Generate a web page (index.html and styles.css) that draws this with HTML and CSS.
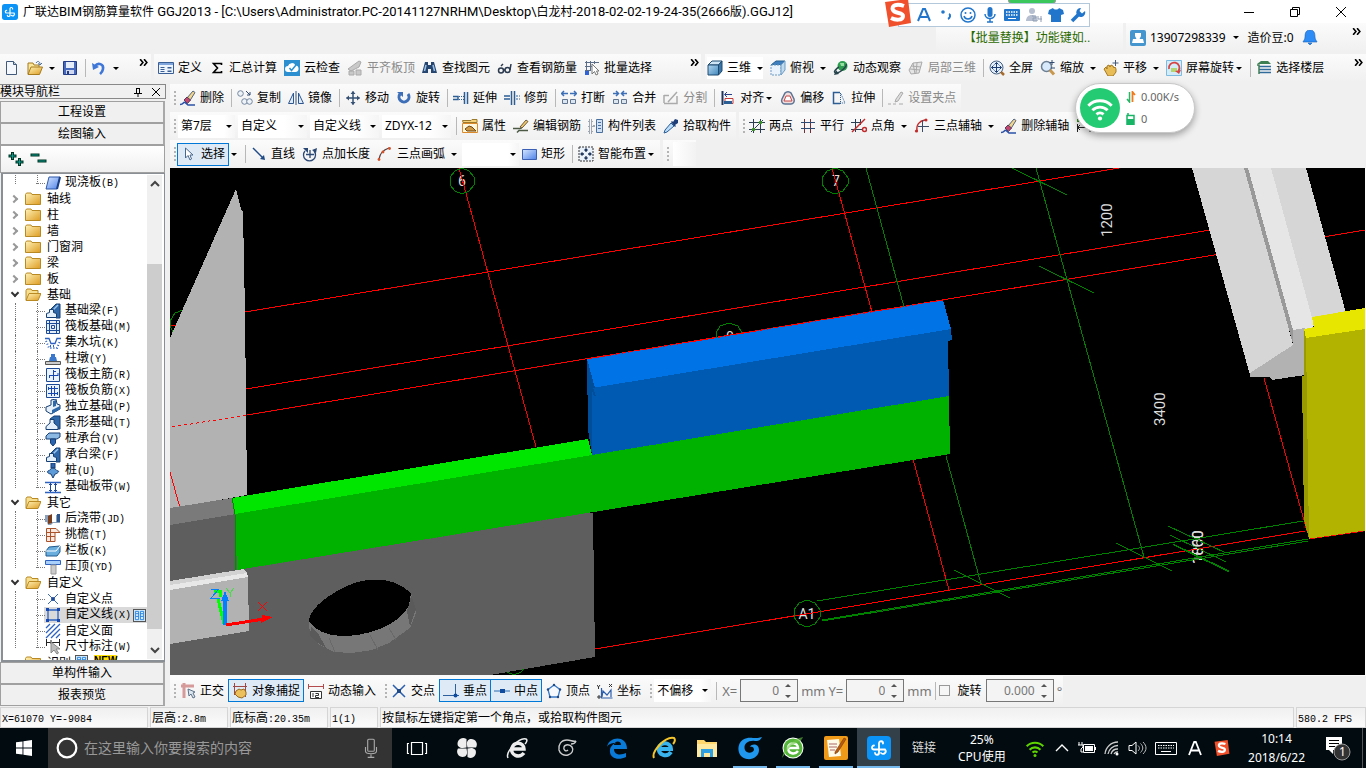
FILE: index.html
```html
<!DOCTYPE html>
<html lang="zh-CN">
<head>
<meta charset="utf-8">
<title>广联达BIM钢筋算量软件 GGJ2013</title>
<link rel="stylesheet" href="styles.css">
</head>
<body>
<svg class="sprite" aria-hidden="true">
  <defs>
    <linearGradient id="gFold" x1="0" y1="0" x2="1" y2="1"><stop offset="0" stop-color="#fff3b8"/><stop offset="1" stop-color="#dd9c22"/></linearGradient>
    <linearGradient id="gBlue" x1="0" y1="0" x2="1" y2="1"><stop offset="0" stop-color="#d6e6ff"/><stop offset="1" stop-color="#4d82e8"/></linearGradient>
    <linearGradient id="gCube" x1="0" y1="0" x2="1" y2="1"><stop offset="0" stop-color="#b5d8f0"/><stop offset="1" stop-color="#4187bd"/></linearGradient>
  </defs>
  <symbol id="glodon" viewBox="0 0 24 24"><rect width="24" height="24" rx="4" fill="#0b93f5"/><path d="M16 7.500a2 2 0 0 0-4-.5v9.500a2 2 0 0 1-4 .5M7 9.500a2 2 0 0 0 0 4h11a2.500 2.500 0 0 1-4 3.500" fill="none" stroke="#fff" stroke-width="1.800" stroke-linecap="round"/></symbol>
  <symbol id="new" viewBox="0 0 16 16"><path d="M2.500 1.500h7l3 3v10h-10z" fill="#f4f8fc" stroke="#40597a"/><path d="M9.500 1.500v3h3" fill="#bcd" stroke="#40597a"/></symbol>
  <symbol id="open" viewBox="0 0 16 16"><path d="M1 14V3h5l1 2h5v3" fill="#fbe79c" stroke="#a67b1d"/><path d="M1 14.500 4 7h11.500l-3 7.500z" fill="url(#gFold)" stroke="#a67b1d"/><path d="M9 3c2-3 4-1 4 1m-2-.5 2 1.500 2-2" fill="none" stroke="#4a6d9a"/></symbol>
  <symbol id="save" viewBox="0 0 16 16"><path d="M1.500 1.500h13v13h-13z" fill="#4668bd" stroke="#243c86"/><path d="M4 2h8v6H4z" fill="#e5ecfa"/><path d="M4 10h8v4H4z" fill="#cfd8ee"/><path d="M5 11h2v3H5z" fill="#243c86"/></symbol>
  <symbol id="undo" viewBox="0 0 16 16"><path d="M4 6c3-4 9-2 8 3-.5 3-2 4-3 5" fill="none" stroke="#3f77d8" stroke-width="2.600"/><path d="M1 3l1 7 6-3z" fill="#3f77d8"/></symbol>
  <symbol id="def" viewBox="0 0 16 16"><path d="M.5 2.500h15v11H.5z" fill="#eef4fb" stroke="#3a5f96"/><path d="M1 3h14v2H1z" fill="#7fa5dc"/><path d="M2.500 7.500h4m-4 2h4m-4 2h4" stroke="#3a5f96"/><path d="M9.500 7h4v1.500h-4zm0 3.500h4V12h-4z" fill="#3a5f96"/></symbol>
  <symbol id="sigma" viewBox="0 0 16 16"><path d="M12.500 5V3.500h-8l4 4.500-4 4.500h8V11" fill="none" stroke="#000" stroke-width="1.600"/></symbol>
  <symbol id="cloud" viewBox="0 0 16 16"><path d="M0 0h16v16H0z" fill="#2b8fd0"/><path d="M4 12a3 3 0 0 1 0-6 4 4 0 0 1 7.500-.5A3.300 3.300 0 0 1 12 12z" fill="#fff"/><path d="M5.500 8l2 2.500L12 5" fill="none" stroke="#2b8fd0" stroke-width="1.500"/></symbol>
  <symbol id="flat" viewBox="0 0 16 16"><path d="M1 9 12 1l2 1-2 5-8 4zM2 11h5v4H2zm7-1h5v5H9z" fill="#c9c9c9" stroke="#aaa"/></symbol>
  <symbol id="bino" viewBox="0 0 16 16"><path d="M3 2h3v3h3V2h3l3 11H9V9H6v4H0z" fill="#27466f"/><path d="M4 5 2.500 11M11 5l1.500 6" stroke="#9bc0ea" stroke-width="1.500"/></symbol>
  <symbol id="glass" viewBox="0 0 16 16"><g fill="none" stroke="#2b3a4e" stroke-width="1.500"><circle cx="4" cy="10.500" r="2.500"/><circle cx="10.500" cy="10" r="2.500"/><path d="M6.500 10h1.500M4 6 6 4M13 10l1-6"/></g></symbol>
  <symbol id="batch" viewBox="0 0 16 16"><path d="M2.500 1v14M6.500 1v10M1 2.500h14M1 6.500h10M1 10.500h6M10.500 1v3" stroke="#5d6f88" fill="none"/><path d="M1 11h4v4H1z" fill="#2f62d6"/><path d="M8 4v10l2.500-2.500L12 15l2-1-1.500-3H15z" fill="#fff" stroke="#777"/></symbol>
  <symbol id="cube" viewBox="0 0 16 16"><path d="M1 5 5 1h10l-3.500 4z" fill="#cfe5f5" stroke="#1f4a70"/><path d="M1 5h10.500v10H1z" fill="url(#gCube)" stroke="#1f4a70"/><path d="M11.500 5 15 1v10l-3.500 4z" fill="#3c76a6" stroke="#1f4a70"/></symbol>
  <symbol id="topv" viewBox="0 0 16 16"><path d="M1 5 6 1h9l-4 4z" fill="#3f7fc0" stroke="#28608f"/><path d="M1 5h10v10H1z" fill="#eaf3fb" stroke="#6d9bc4" stroke-dasharray="2 1"/><path d="M11 5 15 1v9l-4 5z" fill="#c2daee" stroke="#6d9bc4"/></symbol>
  <symbol id="orbit" viewBox="0 0 16 16"><circle cx="9.500" cy="6" r="5" fill="#2e9e50"/><path d="M7 3h4v3H8z" fill="#95e0a0"/><path d="M13 4c2 2-6 9-10 9-4-.5 1-5 3-6" fill="none" stroke="#26424b" stroke-width="1.500"/><path d="M1 15l2-5 3 4z" fill="#26424b"/></symbol>
  <symbol id="local" viewBox="0 0 16 16"><path d="M1 10 5 3l9-1-3 11-8 1zM3 6l10 1M5 3l2 11M9 3l-1 10M2 9l10 1" fill="#e5e5e5" stroke="#aaa"/></symbol>
  <symbol id="full" viewBox="0 0 16 16"><circle cx="7.500" cy="7.500" r="6.500" fill="#e3effa" stroke="#48607e"/><path d="M7.500 2.500v10M2.500 7.500h10M5.500 4.500l2-2 2 2M5.500 10.500l2 2 2-2M4.500 5.500l-2 2 2 2m6-4 2 2-2 2" fill="none" stroke="#1e3d74"/><path d="M12 12l3 3" stroke="#a66b2d" stroke-width="2.500"/></symbol>
  <symbol id="zoom" viewBox="0 0 16 16"><circle cx="6.500" cy="6.500" r="5" fill="#d7e9fa" stroke="#6d7f93" stroke-width="1.500"/><path d="M10 10l4 4.500" stroke="#c8984e" stroke-width="3"/><path d="M12 0v5M9.500 2.500h5M11 8h4" stroke="#334b70"/></symbol>
  <symbol id="pan" viewBox="0 0 16 16"><path d="M1 9l2-2 1 2 0-3 2-1 1 2 1-2 2 1 1 2 1-1 1 2v3l-3 4H5z" fill="#e8bd58" stroke="#a57822"/><path d="M12.500 0v6M9.500 3h6" stroke="#47597a" fill="none"/></symbol>
  <symbol id="rots" viewBox="0 0 16 16"><path d="M.5.500h15v15H.5z" fill="#d3ecf9" stroke="#7dbbe0"/><path d="M5 8h6v4H5z" fill="#b4d670"/><path d="M12.500 11A5.300 5.300 0 1 0 3 9" fill="none" stroke="#d74343" stroke-width="1.800"/><path d="M9 11l6-1-2 4z" fill="#d74343"/></symbol>
  <symbol id="floor" viewBox="0 0 16 16"><path d="M1 4 5 1h7l3 3z" fill="#3f7f54"/><path d="M3 6.500h12M3 9.500h12M3 12.500h12" stroke="#306b9c" stroke-width="1.500"/><path d="M1 5h2v9" fill="none" stroke="#3f7f54" stroke-width="1.500"/></symbol>
  <symbol id="erase" viewBox="0 0 16 16"><path d="M7 8l6-7 2 1.500-5 8z" fill="#f2d58c" stroke="#54647c"/><path d="M4 10l3-3 3.500 3-3 3.500z" fill="#c4456e" stroke="#54405c"/><path d="M0 14.500c4 0 3-3 5-2l3 2.500h3l4 0" fill="none" stroke="#2b52a8" stroke-width="1.500"/></symbol>
  <symbol id="copy" viewBox="0 0 16 16"><g fill="#eef3f8" stroke="#7487a0"><circle cx="3.500" cy="3.500" r="2.800"/><circle cx="7.500" cy="11.500" r="2.800"/><circle cx="12.500" cy="11.500" r="2.800"/></g><path d="M9 1l4 4m0-3v3h-3" stroke="#31496f" fill="none"/></symbol>
  <symbol id="mirror" viewBox="0 0 16 16"><path d="M8 1v14M5.500 3v10.500h-5zM10.500 3v10.500h5z" fill="#dfebf8" stroke="#2f578e"/></symbol>
  <symbol id="move" viewBox="0 0 16 16"><path d="M8 1.500v13M1.500 8h13" stroke="#355174" stroke-width="1.500"/><path d="M8 1l2.500 3h-5zM8 15l-2.500-3h5zM1 8l3-2.500v5zM15 8l-3 2.500v-5z" fill="#355174"/></symbol>
  <symbol id="rotate" viewBox="0 0 16 16"><path d="M4 4a5 5 0 1 0 8 0" fill="none" stroke="#3d6fb9" stroke-width="3"/><path d="M1 2h6v5z" fill="#3d6fb9"/></symbol>
  <symbol id="extend" viewBox="0 0 16 16"><path d="M0 6.500h5v3H0" fill="none" stroke="#2c5e94" stroke-width="1.500"/><path d="M6 6.500h5M6 9.500h5" stroke="#2c5e94" stroke-dasharray="1 1"/><path d="M11.500 2v12M14.500 2v12" stroke="#2c5e94" stroke-width="1.500"/></symbol>
  <symbol id="trim" viewBox="0 0 16 16"><path d="M0 6h6M0 9h6" stroke="#2c5e94" stroke-width="1.500"/><path d="M7.500 1v14M10.500 1v14" stroke="#2c5e94" stroke-width="1.500"/><path d="M12 6h4M12 9h4" stroke="#2c5e94" stroke-dasharray="2 1"/></symbol>
  <symbol id="break" viewBox="0 0 16 16"><path d="M1 3.500h6M9 3.500h6M3 1 .5 3.500 3 6M13 1l2.500 2.500L13 6" fill="none" stroke="#3d6fb9" stroke-width="1.500"/><path d="M1.500 9.500h5v4h-5zM9.500 9.500h5v4h-5z" fill="#dce6f0" stroke="#60758f"/></symbol>
  <symbol id="merge" viewBox="0 0 16 16"><path d="M1 3.500h5M10 3.500h5M4 1l2.500 2.500L4 6M12 1 9.500 3.500 12 6" fill="none" stroke="#3d6fb9" stroke-width="1.500"/><path d="M1.500 9.500h5v4h-5zM9.500 9.500h5v4h-5z" fill="#dce6f0" stroke="#60758f"/></symbol>
  <symbol id="split" viewBox="0 0 16 16"><path d="M1 5.500h5M1 13.500h13V6M1 5v8M5 12 14 2" fill="none" stroke="#aaa" stroke-width="1.500"/></symbol>
  <symbol id="align" viewBox="0 0 16 16"><path d="M2.500 1v14" stroke="#1f365c" stroke-width="2"/><path d="M5 4.500h7M7 2 4.500 4.500 7 7" stroke="#273f8a" fill="none"/><path d="M5 8.500h8v5H5z" fill="#fff" stroke="#c23a3a"/><path d="M4 11h8v3H4z" fill="#2c5e94"/></symbol>
  <symbol id="offset" viewBox="0 0 16 16"><path d="M5 3a4 4 0 0 1 6 0l3 6c1 3-1 5-3 5H5c-3 0-4-3-3-5z" fill="#f3dede" stroke="#5b7494" stroke-width="1.500"/><path d="M6 6h4l2 5H4z" fill="#fff" stroke="#c24949"/></symbol>
  <symbol id="stretch" viewBox="0 0 16 16"><path d="M9 2.500H2.500v11H9" fill="none" stroke="#2c5e94" stroke-width="1.500"/><path d="M9.500 3v11M10 4l4 9H9" fill="none" stroke="#2c5e94" stroke-dasharray="1 1"/></symbol>
  <symbol id="grip" viewBox="0 0 16 16"><path d="M0 14h3M5 14h3M11 14h4M8 9l5-7 2 1-5 8-3 1z" fill="#ddd" stroke="#aaa"/></symbol>
  <symbol id="prop" viewBox="0 0 16 16"><path d="M.5 2.500H9l1-1h5v3h-14z" fill="#f6d27b" stroke="#9b7a2d"/><path d="M.5 5.500h15v9H.5z" fill="#fff8e0" stroke="#dd8a2a"/><path d="M3 11l4-3 3 1 4 4H5z" fill="#cf9a45" stroke="#6d4714"/></symbol>
  <symbol id="edit" viewBox="0 0 16 16"><path d="M0 10.500h7c2 0 2-2 3-3M4 14.500l2-2h9" fill="none" stroke="#4c5a45" stroke-width="1.500"/><path d="M7 9l6-7 2 1.500L9 10z" fill="#f0c868" stroke="#6a5740"/></symbol>
  <symbol id="list" viewBox="0 0 16 16"><path d="M1 2h3v3H1zM1 7h3v3H1zM1 12h3v3H1z" fill="none" stroke="#4a5b73" stroke-dasharray="1 1"/><path d="M8.500 1.500h6v13h-6z" fill="#cfe0f2" stroke="#4a6f9f"/><path d="M10 4.500h3m-3 3h3m-3 3h3" stroke="#4a6f9f"/><path d="M5 8h2" stroke="#4a5b73"/></symbol>
  <symbol id="pick" viewBox="0 0 16 16"><path d="M1 15l1-3 6-7 3 3-7 6z" fill="#b9dcfa" stroke="#2c5e94"/><path d="M8 4l1-1 1 1 2-3 3 1v3l-3 2 1 1-1 1z" fill="#1d3e79"/></symbol>
  <symbol id="twop" viewBox="0 0 16 16"><path d="M4.500 1v14M11.500 1v14M0 4.500h16M0 11.500h16M2 14 14 2" stroke="#2d3e52" fill="none"/><circle cx="4.500" cy="11.500" r="1.800" fill="#3b8f28"/><circle cx="11.500" cy="4.500" r="1.800" fill="#3b8f28"/></symbol>
  <symbol id="para" viewBox="0 0 16 16"><path d="M4.500 1v14M10.500 1v14" stroke="#6f2f38"/><path d="M1 4.500h14M1 10.500h14" stroke="#2d4b74"/></symbol>
  <symbol id="angle" viewBox="0 0 16 16"><path d="M4.500 1v13M0 4.500h10M0 11.500h12M9.500 1v6" stroke="#2d3e52"/><path d="M1 14 14 1" stroke="#c22b2b" stroke-width="1.500"/><circle cx="13.500" cy="11.500" r="2" fill="none" stroke="#c22b2b" stroke-width="1.500"/></symbol>
  <symbol id="arcax" viewBox="0 0 16 16"><path d="M3 13c-1-6 2-10 8-11" fill="none" stroke="#c22b2b" stroke-width="1.300"/><path d="M8.500 2v12M4 8.500h11" stroke="#3b4d66"/><circle cx="2.500" cy="13" r="1.600" fill="#c22b2b"/><circle cx="12" cy="2" r="1.500" fill="#c22b2b"/></symbol>
  <symbol id="dim" viewBox="0 0 16 16"><path d="M1 9.500h14M1.500 6v8M14 6v8M4 7 1.500 9.500 4 12" fill="none" stroke="#222"/><path d="M1 1h3v3H1z" fill="#3b8f28"/></symbol>
  <symbol id="cursor" viewBox="0 0 16 16"><path d="M4.500 2v10l2.500-2.500L9 14l1.500-1L9 9h3z" fill="#fff" stroke="#48698e"/></symbol>
  <symbol id="line" viewBox="0 0 16 16"><path d="M2 2l10 10" stroke="#1f4a86" stroke-width="1.500"/><path d="M14 14l-5-1 4-4z" fill="#1f4a86"/></symbol>
  <symbol id="ptlen" viewBox="0 0 16 16"><path d="M3 5a6 6 0 1 0 9 0M8 4v8M4 8.500h8" fill="none" stroke="#2b4774" stroke-width="1.300"/><path d="M1 2h5v5zM10 4l5-2-1 5z" fill="#2b4774"/></symbol>
  <symbol id="arc3" viewBox="0 0 16 16"><path d="M2 13C3 7 6 4 12 2" fill="none" stroke="#5e3e3e" stroke-width="1.300"/><g fill="#d2522c"><circle cx="2" cy="13.500" r="1.400"/><circle cx="6" cy="6" r="1.400"/><circle cx="12.500" cy="2.500" r="1.400"/></g></symbol>
  <symbol id="rect" viewBox="0 0 16 16"><path d="M1.500 3.500h14v10h-14z" fill="url(#gBlue)" stroke="#3a5fb4"/></symbol>
  <symbol id="smart" viewBox="0 0 16 16"><path d="M1 1h14v14H1z" fill="#e9f1fa" stroke="#333" stroke-dasharray="2 1"/><path d="M8 3v3M8 10v3M3 8h3M10 8h3M6.500 4.500 8 3l1.500 1.500m-3 7L8 13l1.500-1.500M4.500 6.500 3 8l1.500 1.500m7-3L13 8l-1.500 1.500" fill="none" stroke="#1f365c" stroke-width="1.300"/></symbol>
  <symbol id="ortho" viewBox="0 0 16 16"><path d="M1 3h13M4 0v15" stroke="#d69a9a" stroke-width="3"/><path d="M8 6l7 3-2 1 2 4-2 1-2-4-2 2z" fill="#dde5ee" stroke="#5d7189"/></symbol>
  <symbol id="snap" viewBox="0 0 16 16"><path d="M2.500 0v12M13.500 0v14M1 3.500h14" stroke="#9d4747"/><path d="M4 8l3-2 2 1 3-1 2 3v3l-4 3-4-1-3-3z" fill="#ecc05d" stroke="#97691d"/></symbol>
  <symbol id="dyn" viewBox="0 0 16 16"><path d="M.5 1v5M15.500 1v5M0 3.500h16" stroke="#b34d4d"/><path d="M2.500 8.500h11v7h-11z" fill="#fff" stroke="#333"/><path d="M5 10v4M7.500 10.500h3v2h-3v2h3.500" fill="none" stroke="#333"/></symbol>
  <symbol id="cross" viewBox="0 0 16 16"><path d="M2 2l12 12M14 2 2 14" stroke="#2b5fae" stroke-width="1.500"/><path d="M6 6h4v4H6z" fill="#1f4a86"/></symbol>
  <symbol id="perp" viewBox="0 0 16 16"><path d="M0 12.500h16M12.500 1v11" stroke="#2b5f9e"/><circle cx="12.500" cy="12.500" r="2" fill="#0e4a9e"/></symbol>
  <symbol id="mid" viewBox="0 0 16 16"><path d="M0 8h16" stroke="#2b6aae"/><path d="M6 6h5v4H6z" fill="#0e4a9e"/></symbol>
  <symbol id="penta" viewBox="0 0 16 16"><path d="M8 2 14 6.500 12 14H4L2 6.500z" fill="#f6faff" stroke="#3a79c5" stroke-width="1.300"/><g fill="#1f4a86"><circle cx="8" cy="2" r="1.200"/><circle cx="14" cy="6.500" r="1.200"/><circle cx="12" cy="14" r="1.200"/><circle cx="4" cy="14" r="1.200"/><circle cx="2" cy="6.500" r="1.200"/></g></symbol>
  <symbol id="coord" viewBox="0 0 16 16"><path d="M4.500 5v10h11M5 14l1-6 4 4 4-5v7" fill="none" stroke="#2b5fae" stroke-width="1.200"/><path d="M0 2l1.500 2L3 2M1.500 4v2M12 1l3 3m0-3-3 3M1 13h2v2H1z" fill="none" stroke="#333"/></symbol>
  <symbol id="folder" viewBox="0 0 16 16"><path d="M.5 3.500 1.500 2H6l1 1.500h8.500v10H.5z" fill="url(#gFold)" stroke="#b98a24"/></symbol>
  <symbol id="folderO" viewBox="0 0 16 16"><path d="M1 13V3.500L2 2h4l1 1.500h6V6" fill="#f7df92" stroke="#b98a24"/><path d="M1 13.500 4 6.500h12l-3 7z" fill="url(#gFold)" stroke="#b98a24"/></symbol>
  <symbol id="t-slab" viewBox="0 0 16 16"><path d="M4 2h11l-3 12H1z" fill="url(#gBlue)" stroke="#2d57a8"/><path d="M12 14l3-12" stroke="#1a3f86" stroke-width="2"/></symbol>
  <symbol id="t-beam" viewBox="0 0 16 16"><path d="M5 7l6-6h4v14h-4z" fill="#2e68a8" stroke="#163f74"/><path d="M8 7l5-5" stroke="#9cc6ee" stroke-width="1.500"/><path d="M1.500 14.500v-4l3-1V6.500h4v3l3 1v4z" fill="#e3effa" stroke="#163f74"/></symbol>
  <symbol id="t-foot" viewBox="0 0 16 16"><path d="M5 4l4-3h6v13h-5z" fill="#2e68a8" stroke="#163f74"/><path d="M1 14.500v-3L5 8V4.500h4V8l4 3.500v3z" fill="#e3effa" stroke="#163f74"/></symbol>
  <symbol id="t-raft" viewBox="0 0 16 16"><path d="M1.500 1.500h13v13h-13zM4.500 1v14M11.500 1v14M1 4.500h14M1 11.500h14M6.500 6.500h3v3h-3z" fill="#e4edfa" stroke="#1d4a96"/></symbol>
  <symbol id="t-pit" viewBox="0 0 16 16"><path d="M0 3.500h4l2 5h4l2-5h4" fill="none" stroke="#2d62c0" stroke-width="1.300"/><path d="M1 6l3 7h8l3-7M5 11h6" fill="none" stroke="#2d62c0" stroke-width="2" stroke-dasharray="1 2"/></symbol>
  <symbol id="t-pier" viewBox="0 0 16 16"><path d="M4 10l1-4h1V3h4v3h1l1 4z" fill="#3b78cc"/><path d="M.5 10.500h15v3H.5z" fill="#ccc" stroke="#555"/></symbol>
  <symbol id="t-main" viewBox="0 0 16 16"><path d="M1.500 1.500h13v13h-13z" fill="#eaf2fc" stroke="#1d4a96"/><path d="M8.500 3v10M8 4.500h3M4 8.500h9M4.500 8v3M13 6v3" fill="none" stroke="#1747b0"/></symbol>
  <symbol id="t-neg" viewBox="0 0 16 16"><path d="M1.500 1.500h13v13h-13z" fill="#eaf2fc" stroke="#1d4a96"/><path d="M6.500 3v10M9.500 3v10M3 5.500h10M3 10.500h10M3.500 4v3M12.500 9v3" fill="none" stroke="#1747b0"/></symbol>
  <symbol id="t-iso" viewBox="0 0 16 16"><path d="M1 8l5-2V1l5-1 1 5 3 1v4l-9 5-5-3z" fill="#e6f0fa" stroke="#163f74"/><path d="M8 2v6l3-1V1zM7 11l8-4v3l-8 5z" fill="#2e68a8"/></symbol>
  <symbol id="t-pile" viewBox="0 0 16 16"><path d="M6 0h4v5H6z" fill="#2b65b0" stroke="#163f74"/><path d="M3 8c2 0 2-3 5-3s3 3 5 3-1 3-3 3l-2 4-2-4C4 11 1 9 3 8z" fill="#5c9bd8" stroke="#163f74"/></symbol>
  <symbol id="t-cap" viewBox="0 0 16 16"><path d="M1 5l3-3h11v4l-3 2H1z" fill="#8bb9e4" stroke="#163f74"/><path d="M5.500 8h5v4L8 15l-2.500-3z" fill="#2b65b0" stroke="#163f74"/></symbol>
  <symbol id="t-strip" viewBox="0 0 16 16"><path d="M0 3.500h16M0 13.500h16" stroke="#2d62c0" stroke-width="1.500"/><path d="M5.500 4v9M10.500 4v9M4 5.500h3M4 11.500h3M9 5.500h3M9 11.500h3" stroke="#1d4a96"/></symbol>
  <symbol id="t-post" viewBox="0 0 16 16"><path d="M0 4h15v8H8l-2 2H3l-1-3H0z" fill="#8a9fba"/><path d="M3 5l4-2v9l-4 1z" fill="#7b3e1c"/><path d="M12 3h3v8h-3z" fill="#2f568a"/><path d="M7 4h4v7H7z" fill="#fff"/></symbol>
  <symbol id="t-eave" viewBox="0 0 16 16"><path d="M1.500 1.500H11l4 4h-5v9H1.500zM1 5.500h9M1 9.500h9M5.500 2v12" fill="#fbe9df" stroke="#a8532c"/></symbol>
  <symbol id="t-rail" viewBox="0 0 16 16"><path d="M1 8l3-4 11-1v6l-3 4H1z" fill="#6aaede" stroke="#1f5b8e"/><path d="M1 8h10l4-5" fill="none" stroke="#fff"/></symbol>
  <symbol id="t-top" viewBox="0 0 16 16"><path d="M.5 1.500h15v4H.5z" fill="#a8d0fa" stroke="#2d62c0"/><path d="M6 6h5v9H6z" fill="#ccc" stroke="#999"/></symbol>
  <symbol id="t-pt" viewBox="0 0 16 16"><path d="M3 3l10 10M13 3 3 13" stroke="#3c68b8"/><circle cx="8" cy="8" r="2" fill="#1d4a96"/></symbol>
  <symbol id="t-line" viewBox="0 0 16 16"><path d="M3 3h10v10H3z" fill="none" stroke="#2d62c0" stroke-width="1.300"/><g fill="#1747b0"><path d="M1 1h3v3H1zM12 1h3v3h-3zM1 12h3v3H1zM12 12h3v3h-3z"/></g></symbol>
  <symbol id="t-area" viewBox="0 0 16 16"><path d="M1 5l4-4M1 10l9-9M1 15 15 1M6 15l9-9M11 15l4-4" stroke="#2d62c0" stroke-width="1.300"/></symbol>
  <symbol id="t-dim" viewBox="0 0 16 16"><path d="M1 3.500h14M1.500 0v7M14.500 0v7M6 1v4" stroke="#222"/><path d="M6 3v11l3-3 3 4 1.500-1L11 10h4z" fill="#bbb" stroke="#888"/></symbol>
  <symbol id="t-cad" viewBox="0 0 12 12"><path d="M0 0h12v12H0z" fill="#d5ecff"/><path d="M1.500 1.500h3.500v9H1.500zM7 1.500h3.500v9H7zM2 4h3M2 7h3M7 4h3M7 7h3" fill="none" stroke="#2380dd"/></symbol>
  <symbol id="sogou" viewBox="0 0 28 28"><path d="M1 3 24 0l3 24-22 4z" fill="#f0502b"/><path d="M20 7C12 4 7 7 9 11c2 4 10 2 10 6 0 5-8 4-12 2" fill="none" stroke="#fff" stroke-width="4"/></symbol>
  <symbol id="wifi" viewBox="0 0 24 24"><g fill="none" stroke="currentColor" stroke-width="2.500"><path d="M2 10a14 14 0 0 1 20 0M5.500 14a9 9 0 0 1 13 0M9 17.500a4.500 4.500 0 0 1 6 0"/></g><circle cx="12" cy="21" r="1.800" fill="currentColor"/></symbol>
</svg>

<header class="title">
  <svg class="i"><use href="#glodon"/></svg>
  <h1>广联达<span>BIM</span>钢筋算量软件 <span>GGJ2013 - [C:\Users\Administrator.PC-20141127NRHM\Desktop\</span>白龙村<span>-2018-02-02-19-24-35(2666</span>版<span>).GGJ12]</span></h1>
  <div class="winbtns">
    <button aria-label="最小化"><svg viewBox="0 0 12 12"><path d="M1 6.500h10" stroke="#000"/></svg></button>
    <button aria-label="还原"><svg viewBox="0 0 12 12"><path d="M1.500 3.500h7v7h-7zM3.500 3V1.500h7v7H9" fill="none" stroke="#000"/></svg></button>
    <button aria-label="关闭"><svg viewBox="0 0 12 12"><path d="M1 1l10 10M11 1 1 11" stroke="#000"/></svg></button>
  </div>
  <i class="greentab"></i>
  <div class="ime">
    <svg class="imelogo"><use href="#sogou"/></svg>
    <svg viewBox="0 0 16 16"><path d="M2 14 7 2h2l5 12M4.500 10h7" fill="none" stroke="#2176cc" stroke-width="2"/></svg>
    <svg viewBox="0 0 16 16"><circle cx="5" cy="5" r="1.800" fill="#2176cc"/><path d="M11 7c2 1 1 4-1 5" stroke="#2176cc" stroke-width="2" fill="none"/></svg>
    <svg viewBox="0 0 16 16"><circle cx="8" cy="8" r="7" fill="none" stroke="#2176cc" stroke-width="1.500"/><circle cx="5.500" cy="6" r="1" fill="#2176cc"/><circle cx="10.500" cy="6" r="1" fill="#2176cc"/><path d="M4 9c1 4 7 4 8 0" fill="none" stroke="#2176cc" stroke-width="1.500"/></svg>
    <svg viewBox="0 0 16 16"><rect x="5.500" y="0" width="5" height="10" rx="2.500" fill="#2176cc"/><path d="M3 7c0 6 10 6 10 0M8 12v3M5 15h6" fill="none" stroke="#2176cc" stroke-width="1.500"/></svg>
    <svg viewBox="0 0 16 16"><rect y="2" width="16" height="12" rx="1" fill="#2176cc"/><path d="M2 5h12M2 8h12" stroke="#fff" stroke-width="1.500" stroke-dasharray="1.500 1"/><path d="M4 11.500h8" stroke="#fff"/></svg>
    <svg viewBox="0 0 16 16"><circle cx="6" cy="4" r="3" fill="#b5bfd0"/><path d="M0 14c0-8 11-8 12 0z" fill="#b5bfd0"/><path d="M6 9h4v2H7v3h4m1-5v3h4m-1-3v6" fill="none" stroke="#8e9cb4"/></svg>
    <svg viewBox="0 0 16 16"><path d="M5 1 1 3 0 7l3 1v7h10V8l3-1-1-4-4-2c-1 2-5 2-6 0z" fill="#2176cc"/></svg>
    <svg viewBox="0 0 16 16"><path d="M2 14l6-6" stroke="#2176cc" stroke-width="3.500"/><path d="M15 4a4.500 4.500 0 1 1-4-3L9.500 4l2.500 2.500z" fill="#2176cc"/></svg>
  </div>
</header>

<div class="row menu">
  <div class="strip notice song">【批量替换】功能键如..</div>
  <div class="strip acct">
    <svg class="i" viewBox="0 0 16 16"><rect width="16" height="16" rx="2" fill="#4596cf"/><path d="M5 3h6v3l-1.500 3h-3L5 6zM3 9h10l1 4H2z" fill="#fff"/></svg>
    <span>13907298339</span><i class="caret"></i><span class="bean">造价豆:0</span>
    <svg class="i" viewBox="0 0 16 16"><path d="M8 0c4 0 5 3 5 7 0 3 2 4 2 5H1c0-1 2-2 2-5 0-4 1-7 5-7zM6 13h4l-2 2z" fill="#2d8cf5" stroke="#165fb8" stroke-width=".6"/></svg>
    <button class="more" aria-label="更多"><svg viewBox="0 0 8 6"><path d="M1 0l2.500 3L1 6M4.500 0 7 3 4.500 6" fill="none" stroke="#000" stroke-width="1.400"/></svg></button>
  </div>
</div>

<div class="row">
  <div class="strip file">
    <button class="tb" aria-label="新建"><svg class="i"><use href="#new"/></svg></button>
    <button class="tb" aria-label="打开"><svg class="i"><use href="#open"/></svg><i class="caret"></i></button>
    <button class="tb" aria-label="保存"><svg class="i"><use href="#save"/></svg></button><i class="sep"></i>
    <button class="tb" aria-label="撤销"><svg class="i"><use href="#undo"/></svg><i class="caret"></i></button>
    <button class="more" aria-label="更多"><svg viewBox="0 0 8 6"><path d="M1 0l2.500 3L1 6M4.500 0 7 3 4.500 6" fill="none" stroke="#000" stroke-width="1.400"/></svg></button>
  </div>
  <div class="strip calc">
    <button class="tb"><svg class="i"><use href="#def"/></svg>定义</button>
    <button class="tb"><svg class="i"><use href="#sigma"/></svg>汇总计算</button>
    <button class="tb"><svg class="i"><use href="#cloud"/></svg>云检查</button>
    <button class="tb" disabled><svg class="i"><use href="#flat"/></svg>平齐板顶</button>
    <button class="tb"><svg class="i"><use href="#bino"/></svg>查找图元</button>
    <button class="tb"><svg class="i"><use href="#glass"/></svg>查看钢筋量</button>
    <button class="tb"><svg class="i"><use href="#batch"/></svg>批量选择</button>
    <button class="more" aria-label="更多"><svg viewBox="0 0 8 6"><path d="M1 0l2.500 3L1 6M4.500 0 7 3 4.500 6" fill="none" stroke="#000" stroke-width="1.400"/></svg></button>
  </div>
  <div class="strip view">
    <button class="tb pick"><svg class="i"><use href="#cube"/></svg>三维<i class="caret"></i></button>
    <button class="tb"><svg class="i"><use href="#topv"/></svg>俯视<i class="caret"></i></button>
    <button class="tb"><svg class="i"><use href="#orbit"/></svg>动态观察</button>
    <button class="tb" disabled><svg class="i"><use href="#local"/></svg>局部三维</button><i class="sep"></i>
    <button class="tb"><svg class="i"><use href="#full"/></svg>全屏</button>
    <button class="tb"><svg class="i"><use href="#zoom"/></svg>缩放<i class="caret"></i></button>
    <button class="tb"><svg class="i"><use href="#pan"/></svg>平移<i class="caret"></i></button>
    <button class="tb"><svg class="i"><use href="#rots"/></svg>屏幕旋转<i class="caret tight"></i></button><i class="sep"></i>
    <button class="tb"><svg class="i"><use href="#floor"/></svg>选择楼层</button>
    <button class="more" aria-label="更多"><svg viewBox="0 0 8 6"><path d="M1 0l2.500 3L1 6M4.500 0 7 3 4.500 6" fill="none" stroke="#000" stroke-width="1.400"/></svg></button>
  </div>
</div>

<div class="body">
  <aside class="side song">
    <div class="sidehead"><span>模块导航栏</span>
      <svg viewBox="0 0 10 10"><path d="M3.500 1v5M6.500 1v5M3 1.500h4M1 6.500h8M5 7v3" stroke="#000" fill="none"/></svg>
      <svg viewBox="0 0 10 10"><path d="M1 1l8 8M9 1 1 9" stroke="#000" fill="none"/></svg></div>
    <button class="nav">工程设置</button>
    <button class="nav">绘图输入</button>
    <div class="expand">
      <button aria-label="全部展开"><svg viewBox="0 0 16 16"><path d="M1 5h8M5 1v8M8 11h8M12 7v8" stroke="#032" stroke-width="3"/><path d="M2 5h6M5 2v6M9 11h6M12 8v6" stroke="#0b9a8d" stroke-width="1"/></svg></button>
      <button aria-label="全部折叠"><svg viewBox="0 0 16 16"><path d="M0 4h9M7 10h9" stroke="#032" stroke-width="3"/><path d="M1 4h7M8 10h7" stroke="#0b9a8d" stroke-width="1"/></svg></button>
    </div>
    <div class="tree">
      <ul>
        <li class="kid last"><svg class="i"><use href="#t-slab"/></svg><span>现浇板<b>(B)</b></span></li>
        <li class="grp"><i></i><svg class="i"><use href="#folder"/></svg><span>轴线</span></li>
        <li class="grp"><i></i><svg class="i"><use href="#folder"/></svg><span>柱</span></li>
        <li class="grp"><i></i><svg class="i"><use href="#folder"/></svg><span>墙</span></li>
        <li class="grp"><i></i><svg class="i"><use href="#folder"/></svg><span>门窗洞</span></li>
        <li class="grp"><i></i><svg class="i"><use href="#folder"/></svg><span>梁</span></li>
        <li class="grp"><i></i><svg class="i"><use href="#folder"/></svg><span>板</span></li>
        <li class="grp open"><i></i><svg class="i"><use href="#folderO"/></svg><span>基础</span></li>
        <li class="kid"><svg class="i"><use href="#t-beam"/></svg><span>基础梁<b>(F)</b></span></li>
        <li class="kid"><svg class="i"><use href="#t-raft"/></svg><span>筏板基础<b>(M)</b></span></li>
        <li class="kid"><svg class="i"><use href="#t-pit"/></svg><span>集水坑<b>(K)</b></span></li>
        <li class="kid"><svg class="i"><use href="#t-pier"/></svg><span>柱墩<b>(Y)</b></span></li>
        <li class="kid"><svg class="i"><use href="#t-main"/></svg><span>筏板主筋<b>(R)</b></span></li>
        <li class="kid"><svg class="i"><use href="#t-neg"/></svg><span>筏板负筋<b>(X)</b></span></li>
        <li class="kid"><svg class="i"><use href="#t-iso"/></svg><span>独立基础<b>(P)</b></span></li>
        <li class="kid"><svg class="i"><use href="#t-foot"/></svg><span>条形基础<b>(T)</b></span></li>
        <li class="kid"><svg class="i"><use href="#t-cap"/></svg><span>桩承台<b>(V)</b></span></li>
        <li class="kid"><svg class="i"><use href="#t-beam"/></svg><span>承台梁<b>(F)</b></span></li>
        <li class="kid"><svg class="i"><use href="#t-pile"/></svg><span>桩<b>(U)</b></span></li>
        <li class="kid last"><svg class="i"><use href="#t-strip"/></svg><span>基础板带<b>(W)</b></span></li>
        <li class="grp open"><i></i><svg class="i"><use href="#folderO"/></svg><span>其它</span></li>
        <li class="kid"><svg class="i"><use href="#t-post"/></svg><span>后浇带<b>(JD)</b></span></li>
        <li class="kid"><svg class="i"><use href="#t-eave"/></svg><span>挑檐<b>(T)</b></span></li>
        <li class="kid"><svg class="i"><use href="#t-rail"/></svg><span>栏板<b>(K)</b></span></li>
        <li class="kid last"><svg class="i"><use href="#t-top"/></svg><span>压顶<b>(YD)</b></span></li>
        <li class="grp open"><i></i><svg class="i"><use href="#folderO"/></svg><span>自定义</span></li>
        <li class="kid"><svg class="i"><use href="#t-pt"/></svg><span>自定义点</span></li>
        <li class="kid sel"><svg class="i"><use href="#t-line"/></svg><span>自定义线<b>(X)</b></span><svg class="cad"><use href="#t-cad"/></svg></li>
        <li class="kid"><svg class="i"><use href="#t-area"/></svg><span>自定义面</span></li>
        <li class="kid last"><svg class="i"><use href="#t-dim"/></svg><span>尺寸标注<b>(W)</b></span></li>
        <li class="grp cut"><svg class="i"><use href="#folder"/></svg><span>识别</span><svg class="cad"><use href="#t-cad"/></svg><em>NEW</em></li>
      </ul>
      <div class="scroll"><svg viewBox="0 0 10 10"><path d="M1 7l4-4 4 4" fill="none" stroke="#444" stroke-width="2"/></svg><i></i><svg viewBox="0 0 10 10"><path d="M1 3l4 4 4-4" fill="none" stroke="#444" stroke-width="2"/></svg></div>
    </div>
    <button class="nav">单构件输入</button>
    <button class="nav">报表预览</button>
  </aside>

  <main class="work">
    <div class="row">
      <div class="strip">
        <i class="gripper"></i>
        <button class="tb"><svg class="i"><use href="#erase"/></svg>删除</button><i class="sep"></i>
        <button class="tb"><svg class="i"><use href="#copy"/></svg>复制</button>
        <button class="tb"><svg class="i"><use href="#mirror"/></svg>镜像</button><i class="sep"></i>
        <button class="tb"><svg class="i"><use href="#move"/></svg>移动</button>
        <button class="tb"><svg class="i"><use href="#rotate"/></svg>旋转</button><i class="sep"></i>
        <button class="tb"><svg class="i"><use href="#extend"/></svg>延伸</button>
        <button class="tb"><svg class="i"><use href="#trim"/></svg>修剪</button><i class="sep"></i>
        <button class="tb"><svg class="i"><use href="#break"/></svg>打断</button>
        <button class="tb"><svg class="i"><use href="#merge"/></svg>合并</button>
        <button class="tb" disabled><svg class="i"><use href="#split"/></svg>分割</button><i class="sep"></i>
        <button class="tb"><svg class="i"><use href="#align"/></svg>对齐<i class="caret tight"></i></button>
        <button class="tb"><svg class="i"><use href="#offset"/></svg>偏移</button>
        <button class="tb"><svg class="i"><use href="#stretch"/></svg>拉伸</button><i class="sep"></i>
        <button class="tb" disabled><svg class="i"><use href="#grip"/></svg>设置夹点</button>
      </div>
    </div>
    <div class="row">
      <div class="strip picks">
        <i class="gripper"></i>
        <label class="combo"><select class="short" aria-label="楼层"><option>第7层</option></select></label>
        <label class="combo"><select aria-label="构件类别"><option>自定义</option></select></label>
        <label class="combo"><select aria-label="构件类型"><option>自定义线</option></select></label>
        <label class="combo"><select aria-label="构件"><option>ZDYX-12</option></select></label><i class="sep"></i>
        <button class="tb"><svg class="i"><use href="#prop"/></svg>属性</button>
        <button class="tb"><svg class="i"><use href="#edit"/></svg>编辑钢筋</button>
        <button class="tb"><svg class="i"><use href="#list"/></svg>构件列表</button>
        <button class="tb"><svg class="i"><use href="#pick"/></svg>拾取构件</button>
      </div>
      <div class="strip axis">
        <i class="gripper"></i>
        <button class="tb"><svg class="i"><use href="#twop"/></svg>两点</button>
        <button class="tb"><svg class="i"><use href="#para"/></svg>平行</button>
        <button class="tb"><svg class="i"><use href="#angle"/></svg>点角<i class="caret"></i></button>
        <button class="tb"><svg class="i"><use href="#arcax"/></svg>三点辅轴<i class="caret"></i></button>
        <button class="tb"><svg class="i"><use href="#erase"/></svg>删除辅轴</button>
        <button class="tb" aria-label="尺寸标注"><svg class="i"><use href="#dim"/></svg></button>
      </div>
    </div>
    <div class="row">
      <div class="strip draw">
        <i class="gripper"></i>
        <button class="tb on"><svg class="i"><use href="#cursor"/></svg>选择</button><i class="caret tight"></i><i class="sep"></i>
        <button class="tb"><svg class="i"><use href="#line"/></svg>直线</button>
        <button class="tb"><svg class="i"><use href="#ptlen"/></svg>点加长度</button>
        <button class="tb"><svg class="i"><use href="#arc3"/></svg>三点画弧<i class="caret"></i></button>
        <label class="combo"><select class="short" aria-label="画弧方式"><option></option></select></label>
        <button class="tb"><svg class="i"><use href="#rect"/></svg>矩形</button><i class="sep"></i>
        <button class="tb"><svg class="i"><use href="#smart"/></svg>智能布置<i class="caret tight"></i></button>
      </div>
      <div class="strip blank"><i class="gripper"></i><i class="well"></i></div>
    </div>

    <svg class="canvas" viewBox="170 168 1195 507" preserveAspectRatio="xMidYMid slice" shape-rendering="crispEdges">
      <rect x="0" y="0" width="2000" height="1200" fill="#000"/>
      <g class="cadtext" fill="#ddd">
        <text x="462" y="186" text-anchor="middle">6</text><text x="836" y="186" text-anchor="middle">7</text><text x="730" y="342" text-anchor="middle">0</text><text x="807" y="619" text-anchor="middle">A1</text>
        <text class="big" transform="translate(1112 237) rotate(-90)">1200</text>
        <text class="big" transform="translate(1165 426) rotate(-90)">3400</text>
        <text class="big" transform="translate(1203 564) rotate(-90)">1060</text>
        <text class="big" transform="translate(1203 564) rotate(-90)">1800</text>
      </g>
      <g fill="none" stroke="#f00">
        <path d="M170 325h7M245 312 1119 168M246 389 1210 230M247 415 1365 230M595 649 1305 531M459 168 536 447M832 168 872 312M913 459 949 590M1264 378 1307 531"/>
      </g>
      <g fill="none" stroke="#008200">
        <path d="M866 168 904 307M946 456 981 584M1036 168 1144 557M1012 168l55 27M1039 266l55 27M1116 543l56 28M954 570l56 28M1168 526l58 27M1170 535l56 27M1173 544l56 27M1174 545l55 27M817 601 1303 521M822 620 1308 539M822 621 1308 541"/>
        <path d="M462 168l7 3 5 6v8l-5 6-7 3-7-3-5-6v-8l5-6zM835 168l8 3 5 7v6l-5 7-8 3-8-3-5-7v-6l5-7zM729 323l9 3 4 7v6H716v-6l4-7zM807 600l8 3 5 7v7l-5 7-8 3-8-3-5-7v-7l5-7zM183 310l-8 3-5 8v5l4 8M502 664l5 8 7 3 7-3 4-5"/>
      </g>
      <path d="M170 338 236 189l5 20 2 3 2 100 2 183-77 14z" fill="#b2b2b2"/>
      <path d="M172 427l75-12" stroke="#f00" stroke-dasharray="3 3"/><path d="M170 472l10 36" stroke="#f00"/>
      <path d="M170 508l62-10 4 16-66 11z" fill="#7a7a7a"/>
      <path d="M170 525l66-11 357-1 2 144-105 18H170z" fill="#5e5e5e"/>
      <path d="M232 498l356-59 4 16-357 59z" fill="#00e600"/>
      <path d="M235 514 949 396l1 58-713 116z" fill="#00b200"/>
      <path d="M232 498l3 16 1 56" fill="none" stroke="#008c00"/>
      <path d="M170 581l74-12 3 4-77 12z" fill="#d2d2d2"/><path d="M170 585l77-12 1 4-78 13z" fill="#e8e8e8"/><path d="M170 590l78-13 1 54-79 13z" fill="#b2b2b2"/>
      <path d="M309 622l1 14 10 9 14 7 18 1 20-3 17-7 21-15 6-15-5-20z" fill="#777"/>
      <path d="M311 627l7 6 8 15-11-7-5-6zM411 594l5 15-6 17-3-15 3-9z" fill="#5a5a5a"/><path d="M329 638l6 14M370 635l8 15M389 628l7 12" stroke="#696969"/>
      <path d="M309 622c0-12 14-23 30-32 22-13 52-16 72 3l-2 12c-7 16-32 29-61 31-19 1-32-5-39-14z" fill="#000"/>
      <path d="M587 359l8 29-3 67-4-25z" fill="#004d99"/><path d="M587 359 943 300l8 29-356 59z" fill="#0073e6"/><path d="M592 388 951 329l1 11-4 1 1 55-357 59z" fill="#005ab2"/>
      <path d="M587 359 943 300" stroke="#f00" stroke-dasharray="5 2"/><path d="M592 388l3 8" stroke="#004d99" stroke-width="2"/>
      <path d="M1192 168h54l47 177-43 30z" fill="#d6d6d6"/><path d="M1244 168h5l44 161v15z" fill="#999"/><path d="M1271 168h35l40 145-34 6z" fill="#d6d6d6"/><path d="M1248 168h23l43 157-2 4-19 1z" fill="#e6e6e6"/>
      <path d="M1293 330l12-2v47l-33 5-2-3h-20v-4l43-28z" fill="#b2b2b2"/>
      <path d="M1312 317l53-9v21l-59 9-2-9 10-2z" fill="#e6e600"/><path d="M1306 338l59-9v202l-56 8z" fill="#b2b200"/><path d="M1304 329l2 9 3 201-5-19-2-144h2z" fill="#999900"/><path d="M1310 539l55-8" stroke="#f00" stroke-dasharray="5 2"/>
      <g fill="none"><path d="M224 624l-6-25" stroke="#0f0" stroke-width="3"/><path d="M214 591h6v6" stroke="#0f0" stroke-width="3"/><path d="M225 625v-27" stroke="#007fff" stroke-width="4"/><path d="M226 625l38-6" stroke="#f00" stroke-width="3"/><path d="M211 589h8l-8 9h9" stroke="#007fff"/><path d="M226 588l4 5 4-5M230 593v4" stroke="#4d4"/><path d="M258 602l9 9M267 602l-9 9" stroke="#f00"/></g>
      <path d="M225 591l4 10h-8z" fill="#007fff"/><path d="M273 617l-12 6 1-8z" fill="#f00"/>
    </svg>

    <div class="row snapbar">
      <div class="strip">
        <i class="gripper"></i>
        <button class="tb"><svg class="i"><use href="#ortho"/></svg>正交</button>
        <button class="tb on"><svg class="i"><use href="#snap"/></svg>对象捕捉</button>
        <button class="tb"><svg class="i"><use href="#dyn"/></svg>动态输入</button>
      </div>
      <div class="strip">
        <i class="gripper"></i>
        <button class="tb"><svg class="i"><use href="#cross"/></svg>交点</button>
        <button class="tb on"><svg class="i"><use href="#perp"/></svg>垂点</button>
        <button class="tb on"><svg class="i"><use href="#mid"/></svg>中点</button>
        <button class="tb"><svg class="i"><use href="#penta"/></svg>顶点</button>
        <button class="tb"><svg class="i"><use href="#coord"/></svg>坐标</button>
      </div>
      <div class="strip picks">
        <i class="gripper"></i>
        <label class="combo"><select class="short" aria-label="偏移方式"><option>不偏移</option></select></label><i class="sep"></i>
        <label class="num">X=<span><input value="0" disabled><i></i></span>mm</label>
        <label class="num">Y=<span><input value="0" disabled><i></i></span>mm</label><i class="sep"></i>
        <label class="chk"><input type="checkbox">旋转</label>
        <label class="num"><span class="wide"><input value="0.000" disabled aria-label="旋转角度"><i></i></span>°</label>
      </div>
    </div>
  </main>
</div>

<footer class="status song">
  <span class="s1"><b>X=61070 Y=-9084</b></span><span class="s2">层高<b>:2.8m</b></span><span class="s3">底标高<b>:20.35m</b></span><span class="s4"><b>1(1)</b></span><span class="s5">按鼠标左键指定第一个角点，或拾取构件图元</span><span class="s6"><b>580.2 FPS</b></span>
</footer>

<nav class="taskbar">
  <button class="start" aria-label="开始"><svg viewBox="0 0 16 16"><path d="M0 2.300 6.500 1.400v6.100H0zM7.400 1.300 16 0v7.500H7.400zM0 8.500h6.500v6.100L0 13.700zM7.400 8.500H16V16l-8.600-1.300z" fill="#fff"/></svg></button>
  <label class="search"><svg viewBox="0 0 20 20"><circle cx="10" cy="10" r="8.500" fill="none" stroke="#fff" stroke-width="2"/></svg><input placeholder="在这里输入你要搜索的内容"><svg viewBox="0 0 20 20"><rect x="7" y="2" width="6" height="11" rx="1" fill="none" stroke="#aaa"/><path d="M5 9v4c0 3 10 3 10 0V9M10 16v2.500M7 18.500h6" fill="none" stroke="#aaa"/></svg></label>
  <div class="apps">
    <button aria-label="任务视图"><svg viewBox="0 0 24 24"><path d="M6.500 6.500h11v12h-11zM4 7.500H2.500v10H4M20 7.500h1.500v10H20" fill="none" stroke="#fff" stroke-width="1.200"/></svg></button>
    <button aria-label="四叶草"><svg viewBox="0 0 24 24"><path d="M11.500 11.500V3C6 0 1 5 3 10c3 3 6 2 8.500 1.500zM12.500 11.500H21c3-5-2-10-7-8-3 2-2 5-1.500 8zM12.500 12.500V21c5 3 10-2 8-7-3-3-5-2-8-1.500zM11.500 12.500H3c-3 5 2 10 7 8 3-2 2-5 1.500-8z" fill="#eee"/></svg></button>
    <button aria-label="浏览器"><svg viewBox="0 0 24 24"><path d="M19 17c-5 6-14 2-12-5 2-7 12-6 12 1H8" fill="none" stroke="#eee" stroke-width="3.500"/><path d="M3 22C0 16 14 1 21 3c2 1 0 4-1 5" fill="none" stroke="#eee" stroke-width="1.500"/></svg></button>
    <button aria-label="螺旋"><svg viewBox="0 0 24 24"><path d="M21 5c-3 1-5-1-9-1-6 0-9 5-8 10 1 4 5 6 9 5s6-5 4-8-7-3-8 0 2 5 4 3M21 5c-1 3-4 3-5 3" fill="none" stroke="#ccc" stroke-width="1.400"/></svg></button>
    <button aria-label="Edge"><svg viewBox="0 0 24 24"><path d="M2 11C4 0 22-1 22 13H9c0 7 8 6 12 4v4c-8 4-17 1-16-7 0-3 3-6 6-7-6 0-8 2-9 4zm7-2h7c0-5-7-4-7 0z" fill="#0a7ad8"/></svg></button>
    <button aria-label="IE"><svg viewBox="0 0 24 24"><path d="M19 16c-4 6-13 3-12-4 1-7 12-6 12 1H8" fill="none" stroke="#3ab4ee" stroke-width="4"/><path d="M2 22C-1 16 13 0 22 2c2 2 0 5-1 6" fill="none" stroke="#f6c52c" stroke-width="2"/></svg></button>
    <button aria-label="文件资源管理器"><svg viewBox="0 0 24 24"><path d="M2 4h7l2 2h11v15H2z" fill="#ffd76c"/><path d="M2 8h20v13H2z" fill="#ffe9a0"/><path d="M6 13h12v8h-3v-4H9v4H6z" fill="#2e9fe0"/></svg></button>
    <button class="run" aria-label="广联达"><svg viewBox="0 0 24 24"><path d="M24 1c-2 4-4 4-7 4C9 4 5 9 7 14c2 4 8 3 9 0 0-3-2-4-4-3 2-4 9-3 9 3 0 6-6 10-12 9C2 22-1 15 1 9 3 3 9 1 15 2c4 0 6 0 9-1z" fill="#1f97ee"/></svg></button>
    <button class="run" aria-label="360浏览器"><svg viewBox="0 0 24 24"><circle cx="12" cy="12" r="10.500" fill="#fff"/><circle cx="12" cy="12" r="9.500" fill="#55b53a"/><path d="M17 15c-3 4-10 3-10-3 1-6 10-6 10 0H8" fill="none" stroke="#fff" stroke-width="2.500"/><path d="M1 22C3 12 10 4 22 1c-2 5-6 5-10 8-5 3-7 8-11 13z" fill="#6cc644" opacity=".6"/></svg></button>
    <button class="run" aria-label="记事"><svg viewBox="0 0 24 24"><rect width="24" height="24" rx="2" fill="#f09a1a"/><path d="M3 4l12-1 2 17-12 1z" fill="#fffbe8"/><path d="M5 8h8M5 11h8M6 14h5" stroke="#a66" stroke-width="1.200"/><path d="M11 16 20 2l2 1-8 13-3 2z" fill="#b85a10" stroke="#7a3a08" stroke-width=".6"/></svg></button>
    <button class="run act" aria-label="GGJ2013"><svg><use href="#glodon"/></svg></button>
  </div>
  <a class="link" href="#">链接</a>
  <p class="cpu">25%<br>CPU使用</p>
  <div class="tray">
    <svg class="g"><use href="#wifi"/></svg>
    <svg viewBox="0 0 20 20"><path d="M4 13l6-6 6 6" fill="none" stroke="#fff" stroke-width="1.400"/></svg>
    <svg viewBox="0 0 20 20"><path d="M6.500 6.500h11v8h-11zM18.500 9v3M2 4v3m3-3v3M1 7h5v2L4 11v3h2" fill="none" stroke="#fff"/><path d="M8 8h8v5H8z" fill="#fff"/></svg>
    <svg viewBox="0 0 20 20"><path d="M3 16A13 13 0 0 1 16 4M6 16A10 10 0 0 1 16 7.500M9 16a7 7 0 0 1 7-5M12 16a4 4 0 0 1 4-2" fill="none" stroke="#ccc" stroke-width="1.300"/><circle cx="15" cy="16" r="1.500" fill="#fff"/></svg>
    <svg viewBox="0 0 20 20"><path d="M2 7.500h3l4-3.500v12l-4-3.500H2z" fill="none" stroke="#fff"/><path d="M11 7.500c2 2 2 3.500 0 5.500M13.500 5.500c3 3 3 6 0 9M16 4c4 4 4 8 0 12" fill="none" stroke="#bbb"/></svg>
    <svg class="kb" viewBox="0 0 24 20"><path d="M1.500 4.500h21v12h-21z" fill="none" stroke="#fff"/><path d="M4 7.500h16M4 10h16" stroke="#fff" stroke-dasharray="1.500 1"/><path d="M7 13.500h10" stroke="#fff"/></svg>
    <svg viewBox="0 0 20 20"><path d="M4 17 9.200 4h1.600L16 17M6 12.500h8" fill="none" stroke="#fff" stroke-width="1.800"/></svg>
    <svg class="sg"><use href="#sogou"/></svg>
  </div>
  <time class="clock">10:14<br>2018/6/22</time>
  <button class="note" aria-label="通知"><svg viewBox="0 0 26 26"><path d="M1 2h16v13H8v4l-4-4H1z" fill="#fff"/><path d="M4 5.500h10M4 8.500h10M4 11.500h6" stroke="#000"/><circle cx="17" cy="17" r="8" fill="#333" stroke="#999"/></svg><span>1</span></button>
</nav>

<div class="float">
  <i><svg><use href="#wifi"/></svg></i>
  <p><svg viewBox="0 0 12 12"><path d="M4.500 1v10L2 8" fill="none" stroke="#24b765" stroke-width="1.500"/><path d="M7.500 11V1l2.500 3" fill="none" stroke="#f07a1c" stroke-width="1.800"/></svg>0.00K/s</p>
  <p><svg viewBox="0 0 12 12"><path d="M2 2.500h7v9H2zM3 0v3" fill="none" stroke="#18b566" stroke-width="1.500"/><path d="M2 6h7v5H2z" fill="#18b566"/></svg>0</p>
</div>
</body>
</html>
```
FILE: styles.css
```css
* { box-sizing: border-box; }
body {
  margin: 0; height: 100vh; display: flex; flex-direction: column; overflow: hidden;
  background: #f0f0f0; color: #000;
  font: 12px/16px "Noto Sans", "Noto Sans CJK SC", sans-serif;
}
button, input, select { font: inherit; color: inherit; margin: 0; padding: 0; border: 0; background: none; border-radius: 0; }
p, h1, ul { margin: 0; padding: 0; list-style: none; font-weight: normal; }
svg { flex: none; display: block; }
.sprite { position: absolute; width: 0; height: 0; }
.i { width: 16px; height: 16px; }
.song { font-family: "Liberation Sans", "Noto Sans CJK SC", sans-serif; }
.song b { font: 10px/16px "Liberation Mono", monospace; }

/* title bar */
.title { height: 23px; flex: none; background: #fff; display: flex; align-items: center; padding: 0 5px 0 2px; gap: 5px; position: relative; }
.title h1 { font-size: 12px; line-height: 22px; white-space: nowrap; }
.title h1 span { font-family: Roboto, sans-serif; font-size: 13px; }
.winbtns { margin-left: auto; display: flex; }
.winbtns button { width: 46px; height: 20px; display: grid; place-items: center; }
.winbtns svg { width: 12px; height: 12px; }
.winbtns button:last-child { margin-right: -3px; }
.ime { position: absolute; right: 276px; top: 3px; z-index: 3; height: 24px; width: 192px; border: 1px solid #b4c8dc; background: #fff; display: flex; align-items: center; justify-content: flex-end; gap: 6px; padding-right: 3px; }
.ime svg { width: 16px; height: 16px; }
.ime .imelogo { position: absolute; left: -15px; top: -5px; width: 28px; height: 28px; }
.greentab { position: absolute; right: 310px; top: 0; width: 48px; height: 4px; background: #3cc75c; border: 1px solid #999; border-top: 0; border-radius: 0 0 6px 6px; }

/* toolbars */
.row { display: flex; flex: none; height: 28px; gap: 3px; }
.strip { display: flex; align-items: center; gap: 7px; padding: 0 5px 0 4px; background: linear-gradient(#fbfbfb, #f0f0f0); white-space: nowrap; }
.menu { height: 31px; justify-content: flex-end; padding-bottom: 2px; }
.notice { width: 187px; justify-content: center; color: #2b6a00; padding-left: 0; }
.acct { width: 240px; font-size: 12px; gap: 4px; }
.bean { margin: 0 4px 0 3px; }
.more { align-self: flex-start; margin: 5px 0 0 auto; width: 9px; height: 6px; }
.more svg { width: 9px; height: 7px; }
.file { width: 151px; padding-right: 3px; }
.calc { width: 547px; padding-right: 2px; }
.view { flex: 1; padding-left: 2px; padding-right: 3px; margin-left: 1px; }
.pick { background: #fff; height: 24px; }
.tb { display: flex; align-items: center; gap: 4px; height: 22px; flex: none; }
.tb:disabled { color: #8a8a8a; }
.caret { width: 12px; flex: none; display: grid; place-items: center; margin-right: -1px; }
.caret::after, .combo::after { content: ""; border: 3px solid transparent; border-top-color: #000; border-bottom: 0; }
.tb .caret { margin: 0 -3px 0 -1px; }
.caret.tight, .tb .caret.tight { width: 8px; margin: 0 0 0 -3px; }
.sep { width: 1px; height: 18px; background: #b8b8b8; margin-right: -2px; }
.gripper { width: 2px; height: 14px; background: repeating-linear-gradient(#b4b4b4 0 2px, transparent 2px 4px); margin-right: -3px; }
.on { background: #deebf7; border: 1px solid #0078d7; padding: 0 3px; margin: 0 -3px 0 -3px; height: 23px; }
.on + .on { margin-left: -5px; }
.combo { display: flex; align-items: center; position: relative; height: 23px; background: linear-gradient(90deg, #fff 0 46px, #f5f5f5); margin-right: -4px; }
.combo::after { position: absolute; right: 3px; pointer-events: none; }
.combo select { appearance: none; width: 69px; height: 23px; padding-left: 3px; }
.combo .short { width: 57px; }
.picks .gripper { margin-right: -5px; }
.picks > .combo + .sep { margin-left: 2px; }
.draw .combo { margin: 0 -5px 0 -2px; }
.well { width: 23px; height: 24px; background: linear-gradient(90deg, #fff, #f2f2f2); }
.blank { padding-right: 0; }

/* body split */
.body { flex: 1; min-height: 0; display: flex; gap: 4px; margin-top: 2px; }
.side { width: 166px; flex: none; display: flex; flex-direction: column; }
.sidehead { height: 15px; border: 1px solid #888; border-left: 0; display: flex; align-items: center; gap: 8px; padding-right: 4px; margin-bottom: 2px; }
.sidehead span { margin-right: auto; }
.sidehead svg { width: 10px; height: 10px; }
.nav { height: 22px; flex: none; border: 1px solid #a0a0a0; border-right: 2px solid #a8a8a8; background: #f0f0f0; margin-right: 1px; }
.expand { height: 28px; flex: none; display: flex; align-items: center; gap: 6px; padding: 0 6px; border: 1px solid #a0a0a0; background: linear-gradient(#fff, #f0f0f0); margin-right: 1px; }
.expand svg { width: 17px; height: 16px; }
.tree { flex: 1; min-height: 0; overflow: hidden; display: flex; background: #fff; border: 2px solid #8a8f96; border-top-width: 1px; border-right-width: 1px; margin: 0 1px; padding: 1px 2px 1px 0; }
.tree ul { flex: 1; min-width: 0; }
.tree li { display: flex; align-items: center; height: 16px; white-space: nowrap; position: relative; }
.tree span { line-height: 16px; }
.kid { padding-left: 42px; gap: 4px; }
.kid::before { content: ""; position: absolute; left: 12px; top: 0; width: 21px; height: 16px; border-left: 1px dotted #777; border-right: 1px dotted #777; }
.kid.last::before { height: 9px; }
.kid::after { content: ""; position: absolute; left: 33px; top: 8px; width: 9px; border-top: 1px dotted #777; }
.grp { gap: 6px; padding-left: 22px; }
.grp i { position: absolute; left: 8px; width: 6px; height: 6px; border: solid #999; border-width: 2px 2px 0 0; transform: rotate(45deg); }
.grp.open i { border-color: #333; transform: rotate(135deg); left: 9px; top: 3px; }
.sel { background: linear-gradient(90deg, transparent 41px, #d9d9d9 41px); }
.cad { width: 13px; height: 13px; border: 1px solid #555; margin-left: -2px; }
.grp.cut { align-items: flex-start; }
.cut em { background: #ffe000; font: bold 10px/12px "Liberation Sans", sans-serif; }
.scroll { width: 15px; flex: none; background: #f0f0f0; display: flex; flex-direction: column; align-items: center; padding: 4px 0; }
.scroll svg { width: 10px; height: 10px; }
.scroll i { width: 15px; flex: 1; margin: 75px 0 16px; background: #cdcdcd; }
.work { flex: 1; min-width: 0; display: flex; flex-direction: column; }
.canvas { flex: 1; min-height: 0; width: 100%; border-right: 1px solid #fff; }
.cadtext { font: 14px Roboto, sans-serif; }
.cadtext .big { font-size: 15px; }

/* bottom bars */
.snapbar { height: 31px; gap: 0; border-top: 1px solid #fafafa; }
.snapbar .strip { padding-right: 5px; padding-bottom: 1px; }
.num { display: flex; align-items: center; gap: 3px; font-size: 13px; color: #777; margin-right: -4px; }
.num span { display: flex; align-items: center; width: 58px; height: 23px; border: 1px solid #777; background: #f4f4f4; }
.num .wide { width: 68px; }
.num input { flex: 1; min-width: 0; text-align: right; font-size: 12px; }
.num i { width: 18px; height: 18px; flex: none; display: flex; flex-direction: column; justify-content: space-between; align-items: center; padding: 2px; }
.num i::before, .num i::after { content: ""; border: 3px solid transparent; border-bottom-color: #555; border-top: 0; }
.num i::after { border-top: 3px solid #555; border-bottom: 0; }
.chk { display: flex; align-items: center; gap: 8px; margin: 0 -3px 0 -2px; }
.chk input { appearance: none; width: 11px; height: 11px; border: 1px solid #999; background: #f6f6f6; }
.status { display: flex; flex: none; height: 22px; gap: 2px; padding-top: 1px; }
.status span { border: 1px solid #d5d5d5; background: linear-gradient(#f0f0f0, #fbfbfb); padding: 1px 1px; line-height: 18px; white-space: pre; }
.s1 { width: 148px; } .s2 { width: 78px; } .s3 { width: 98px; } .s4 { width: 48px; } .s5 { flex: 1; } .s6 { width: 70px; }

/* task bar */
.taskbar { height: 40px; flex: none; background: #020c10; color: #fff; display: flex; align-items: center; }
.start { width: 48px; height: 40px; display: grid; place-items: center; }
.start svg { width: 16px; height: 16px; }
.search { width: 344px; height: 40px; background: #333; display: flex; align-items: center; padding: 0 10px 0 8px; gap: 6px; }
.search svg { width: 22px; height: 22px; }
.search input { flex: 1; min-width: 0; font-size: 14px; }
.search input::placeholder { color: #999; opacity: 1; }
.apps { display: flex; }
.apps button { width: 43px; height: 40px; display: grid; place-items: center; }
.apps button:nth-child(-n+5) { width: 50px; }
.apps svg { width: 24px; height: 24px; }
.apps .run { background: linear-gradient(#76b9ed, #76b9ed) 50% 100% / 34px 2px no-repeat; }
.apps .act { background-color: #33404a; background-size: 43px 2px; }
.link { color: #ddd; text-decoration: none; margin-left: 12px; }
.cpu { margin-left: 22px; text-align: center; line-height: 17px; white-space: nowrap; }
.tray { display: flex; align-items: center; gap: 5px; margin-left: auto; }
.tray svg { width: 20px; height: 20px; }
.tray .g { color: #5fd400; margin-right: 2px; }
.tray .kb { width: 24px; margin: 0 2px; }
.tray .sg { width: 16px; height: 16px; margin: 0 4px; }
.clock { margin: 0 8px 0 14px; text-align: center; line-height: 19px; }
.note { width: 50px; height: 40px; margin-right: 3px; border-right: 1px solid #555; position: relative; display: grid; place-items: center; }
.note svg { width: 26px; height: 26px; }
.note span { position: absolute; left: 26px; top: 16px; font-size: 12px; }

/* network widget */
.float { position: absolute; right: 171px; top: 83px; width: 120px; height: 50px; border-radius: 25px; background: #fff; border: 1px solid #c8c8c8; box-shadow: 0 3px 7px #0005; display: grid; grid-template-columns: 45px 1fr; align-content: center; row-gap: 4px; padding-left: 4px; color: #666; font-size: 11px; }
.float > i { grid-row: 1 / 3; width: 40px; height: 40px; border-radius: 50%; background: #25cb73; color: #fff; display: grid; place-items: center; }
.float > i svg { width: 28px; height: 28px; }
.float p { display: flex; gap: 4px; align-items: center; }
.float p svg { width: 12px; height: 12px; }
```
